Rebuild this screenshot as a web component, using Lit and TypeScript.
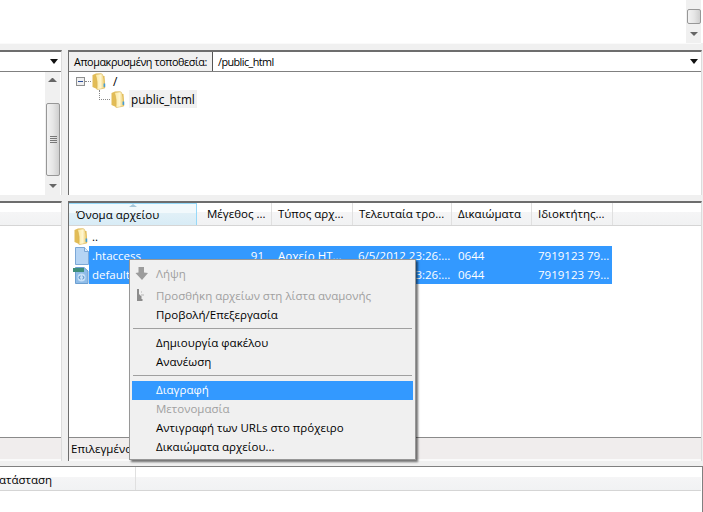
import { LitElement, html, css, svg } from "lit";
import { customElement } from "lit/decorators.js";

const folder = () => html`<svg class="ico fo" width="14" height="17" viewBox="0 0 14 17">
  <defs><linearGradient id="fg" x1="0" x2="1" y1="0" y2="0"><stop offset="0" stop-color="#fbe79c"/><stop offset="0.55" stop-color="#fff6cf"/><stop offset="1" stop-color="#e9c763"/></linearGradient></defs>
  <path d="M0.5 2 L4 0.5 L9 0.5 L9 3 L12.5 3 L13 15 L5 16 L0.5 14 Z" fill="#e2bc56"/>
  <path d="M3.5 1.5 L10 0.8 Q12.5 4 12.8 15 L5 16.8 Q6 8 3.5 1.5 Z" fill="url(#fg)" stroke="#d9b350" stroke-width=".5"/>
  <rect x="11.6" y="10.5" width="1.6" height="3.4" fill="#3f9bd8"/>
</svg>`;

const doc = html`<svg class="ico dc" width="14" height="18" viewBox="0 0 14 18">
  <path d="M0.5 .5 H9.5 L13.5 4.5 V17.5 H0.5 Z" fill="#b5d4f4" stroke="#7ba7d6"/>
  <path d="M9.5 .5 V4.5 H13.5" fill="#dcebfa" stroke="#7ba7d6"/>
</svg>`;

const htmlDoc = html`<svg class="ico" width="16" height="18" viewBox="0 0 16 18">
  <path d="M2.5 1.5 H11 L15 5 V17.5 H2.5 Z" fill="#8fbce8" stroke="#6c9fd0"/>
  <rect x="0" y="2" width="11" height="4" fill="#3f8e7b"/>
  <circle cx="8.5" cy="11.5" r="4" fill="#c7e0f7"/>
  <path d="M7.5 10 L5.8 11.5 L7.5 13 M9.5 10 L11.2 11.5 L9.5 13" fill="none" stroke="#3c7fc0"/>
</svg>`;

const scrollGrip = svg`<path d="M3 0.5H10M3 2.5H10M3 4.5H10M3 6.5H10" stroke="#777" fill="none"/>`;

const columns = [
  { t: "Όνομα αρχείου", w: 128, p: 7, active: true },
  { t: "Μέγεθος ...", w: 75, p: 10 },
  { t: "Τύπος αρχ...", w: 81, p: 6 },
  { t: "Τελευταία τρο...", w: 99, p: 6 },
  { t: "Δικαιώματα", w: 80, p: 6 },
  { t: "Ιδιοκτήτης...", w: 81, p: 6 },
];

const files = [
  { n: ".htaccess", s: "91", t: "Αρχείο HT...", d: "6/5/2012 23:26:...", p: "0644", o: "7919123 79...", i: doc },
  { n: "default.html", s: "", t: "", d: "6/5/2012 23:26:...", p: "0644", o: "7919123 79...", i: htmlDoc },
];

type Item = { t?: string; off?: boolean; hi?: boolean; sep?: string; ic?: unknown; c?: string };
const menu: Item[] = [
  { t: "Λήψη", off: true, c: "first", ic: html`<svg width="16" height="16" viewBox="0 0 16 16"><path d="M4.5 2H10V7.5L14 8L8 15L1.5 8L4.5 7.5Z" fill="#9c9c9c"/></svg>` },
  { t: "Προσθήκη αρχείων στη λίστα αναμονής", off: true, ic: html`<svg width="16" height="16" viewBox="0 0 16 16"><path d="M3 2H5V7L8 10L7 11L9 13L8 14H3Z" fill="#8c8c8c"/><path d="M7 8H10M7 5H8" stroke="#b5b5b5"/></svg>` },
  { t: "Προβολή/Επεξεργασία" },
  { sep: "s1" },
  { t: "Δημιουργία φακέλου" },
  { t: "Ανανέωση" },
  { sep: "s2" },
  { t: "Διαγραφή", hi: true },
  { t: "Μετονομασία", off: true },
  { t: "Αντιγραφή των URLs στο πρόχειρο" },
  { t: "Δικαιώματα αρχείου..." },
];

@customElement("app-root")
export class AppRoot extends LitElement {
  static styles = css`
    :host { display: block; width: 703px; height: 512px; overflow: hidden; }
    .app { position: relative; width: 703px; height: 512px; overflow: hidden; background: #f0f0f0; color: #000;
      font: 11.5px/19px "Open Sans", "Noto Sans", sans-serif; display: flex; flex-direction: column; }
    .log { height: 43px; background: #fff; display: flex; justify-content: flex-end; padding-right: 2px; flex: none; }
    .vbar { width: 15px; background: #f0f0f0; display: flex; flex-direction: column; align-items: center; flex: none; }
    .log .vbar { justify-content: flex-end; }
    .thumb { width: 14px; box-sizing: border-box; border: 1px solid #979797; border-radius: 2px;
      background: linear-gradient(90deg, #f2f2f2, #e6e6e6 50%, #cfcfcf); display: flex; align-items: center; justify-content: center; }
    .log .thumb { height: 15px; }
    .arrow { width: 0; height: 0; border: 4px solid transparent; }
    .arrow.dn { border-top: 4px solid #666; border-bottom: 0; }
    .arrow.up { border-bottom: 4px solid #666; border-top: 0; }
    .log .arrow { margin: 8px 0 7px; }
    .strip { height: 7px; flex: none; border-top: 1px solid #fafafa; margin-right: 2px; box-sizing: border-box; }
    .panes { display: grid; grid-template-columns: 62px 634px; column-gap: 6px; }
    .top { height: 145px; flex: none; margin-bottom: 6px; }
    .bot { height: 260px; flex: none; }
    .pane { display: flex; flex-direction: column; background: #fff; border-top: 2px solid #6d6d6d; min-width: 0; overflow: hidden; box-sizing: border-box; }
    .pane.r { border-left: 1px solid #6d6d6d; border-right: 1px solid #dcdcdc; }
    .pane.l { border-right: 1px solid #dcdcdc; }
    .loc { height: 20px; flex: none; display: flex; border-bottom: 1px solid #808080; box-sizing: border-box; }
    .loc label { width: 144px; box-sizing: border-box; padding: 0 0 0 5px; background: #f0f0f0; border-right: 1px solid #555; font-size: 10.8px; letter-spacing: -0.4px; line-height: 19px; white-space: nowrap; flex: none; }
    .loc .path { flex: 1; padding-left: 5px; line-height: 19px; font-size: 10.8px; letter-spacing: -0.55px; }
    .drop { align-self: center; margin-right: 3px; margin-left: auto; width: 0; height: 0; border: 4px solid transparent; border-top: 5px solid #111; border-bottom: 0; }
    .body { flex: 1; display: flex; justify-content: flex-end; min-height: 0; }
    .body .vbar { width: 15px; margin-right: 1px; }
    .l .vbar { padding-top: 6px; box-sizing: border-box; height: 123px; }
    .l .thumb { height: 73px; margin-top: 21px; margin-bottom: 8px; }
    .tree { flex: 1; display: flex; flex-direction: column; padding: 0 0 0 7px; height: 123px; box-sizing: border-box; }
    .node { display: flex; align-items: center; height: 18px; }
    .exp { width: 9px; height: 9px; box-sizing: border-box; border: 1px solid #8e8f8f; background: #f0f0f0; display: flex; align-items: center; justify-content: center; flex: none; }
    .exp i { width: 5px; height: 1px; background: #2b4d9b; }
    .dot { width: 6px; border-top: 1px dotted #888; margin-right: 1px; flex: none; }
    .slash { margin-left: 7px; font-size: 12px; }
    .second { padding-left: 23px; }
    .elbow { width: 11px; height: 10px; margin-right: 1px; align-self: flex-start; border-left: 1px dotted #888; border-bottom: 1px dotted #888; box-sizing: border-box; flex: none; }
    .tag { margin-left: 4px; padding: 0 2px; background: #f0f0f0; height: 18px; line-height: 18px; font-size: 11.8px; }
    .head { height: 23px; flex: none; display: flex; box-sizing: border-box; border-bottom: 1px solid #d5d5d5; background: linear-gradient(#fff 0 9px, #f5f5f6 9px, #f1f2f3); }
    .col { box-sizing: border-box; border-right: 1px solid #e0e0e0; line-height: 22px; white-space: nowrap; overflow: hidden; position: relative; flex: none; font-size: 11.5px; }
    .col.active { border: 1px solid #96d9f9; border-bottom: 0; border-left: 0; background: linear-gradient(#f2f9fc 0 9px, #e1f0f7 9px, #d8ecf6); }
    .sort { position: absolute; left: 60px; top: 0; width: 0; height: 0; border: 4px solid transparent; border-bottom: 3px solid #a6c6d8; border-top: 0; }
    .rows { flex: 1; padding-top: 1px; display: flex; flex-direction: column; }
    .row { height: 19px; display: flex; align-items: center; flex: none; }
    .ico { flex: none; display: block; }
    .iconcell { width: 20px; flex: none; display: flex; padding-left: 4px; box-sizing: border-box; }
    .iconcell .fo { margin-left: 1px; }
    .iconcell .dc { margin-left: 2px; }
    .cells { display: flex; height: 19px; width: 523px; align-items: center; white-space: nowrap; }
    .sel { background: #3399ff; color: #fff; }
    .cell { flex: none; box-sizing: border-box; overflow: hidden; }
    .up { padding-left: 1px; }
    .c1 { width: 110px; padding-left: 3px; } .c2 { width: 65px; text-align: right; } .c3 { width: 94px; padding-left: 14px; } .c4 { width: 100px; } .c5 { width: 80px; } .c6 { width: 74px; }
    .status { height: 24px; flex: none; border-top: 1px solid #8a8a8a; background: #f0eded; box-sizing: border-box; padding-left: 2px; line-height: 22px; border-bottom: 2px solid #fafafa; }
    .queue { height: 46px; flex: none; margin-top: 5px; background: #fff; border-top: 1px solid #808080; border-right: 1px solid #808080; box-sizing: border-box; width: 703px; }
    .queue .head { height: 24px; background: linear-gradient(#fff 0 10px, #f5f5f6 10px, #f1f2f3); width: 701px; }
    .qc { width: 136px; flex: none; box-sizing: border-box; border-right: 1px solid #e0e0e0; display: flex; justify-content: flex-end; padding-right: 83px; line-height: 25px; overflow: hidden; white-space: nowrap; }
    .qc span { flex: none; }
    .menu { position: absolute; left: 129px; top: 259px; width: 287px; height: 201px; box-sizing: border-box; background: #f0f0f0; border: 1px solid #979797; padding: 3px 2px 2px;
      box-shadow: 2px 2px 2px rgba(0,0,0,.55); display: flex; flex-direction: column; }
    .mi { height: 19px; flex: none; display: flex; align-items: center; padding-left: 24px; position: relative; white-space: nowrap; box-sizing: border-box; }
    .mi.d { color: #a0a0a0; }
    .mi.h { background: #3399ff; color: #fff; }
    .mi svg { position: absolute; left: 2px; top: 1px; }
    .mi.first { margin-top: 1px; margin-bottom: 3px; }
    .sp { height: 1px; background: #a0a0a0; margin: 4px 1px 4px 1px; flex: none; }
    .sp.s2 { margin-bottom: 5px; }
    .sp.s2 ~ .mi { padding-bottom: 2px; }
  `;

  render() {
    const head = html`<div class="head">${columns.map(c => html`<div class=${"col" + (c.active ? " active" : "")} style="width:${c.w}px;padding-left:${c.p}px">${c.active ? html`<i class="sort"></i>` : ""}${c.t}</div>`)}</div>`;
    return html`<div class="app">
      <div class="log"><div class="vbar"><div class="thumb"></div><div class="arrow dn"></div></div></div>
      <div class="strip"></div>
      <div class="panes top">
        <div class="pane l">
          <div class="loc"><span class="drop"></span></div>
          <div class="body"><div class="vbar"><div class="arrow up"></div><div class="thumb"><svg width="13" height="7">${scrollGrip}</svg></div><div class="arrow dn"></div></div></div>
        </div>
        <div class="pane r">
          <div class="loc"><label>Απομακρυσμένη τοποθεσία:</label><span class="path">/public_html</span><span class="drop"></span></div>
          <div class="tree">
            <div class="node"><span class="exp"><i></i></span><span class="dot"></span>${folder()}<span class="slash">/</span></div>
            <div class="node second"><span class="elbow"></span>${folder()}<span class="tag">public_html</span></div>
          </div>
        </div>
      </div>
      <div class="panes bot">
        <div class="pane l">
          <div class="head"></div><div class="rows"></div><div class="status"></div>
        </div>
        <div class="pane r">
          ${head}
          <div class="rows">
            <div class="row"><span class="iconcell">${folder()}</span><div class="cell c1 up">..</div></div>
            ${files.map(f => html`<div class="row"><span class="iconcell">${f.i}</span><div class="cells sel"><div class="cell c1">${f.n}</div><div class="cell c2">${f.s}</div><div class="cell c3">${f.t}</div><div class="cell c4">${f.d}</div><div class="cell c5">${f.p}</div><div class="cell c6">${f.o}</div></div></div>`)}
          </div>
          <div class="status">Επιλεγμένα 2 αρχεία.</div>
        </div>
      </div>
      <div class="queue"><div class="head"><div class="qc"><span>Κατάσταση</span></div></div></div>
      <div class="menu">
        ${menu.map(m => m.sep ? html`<div class=${"sp " + m.sep}></div>` : html`<div class=${"mi" + (m.off ? " d" : "") + (m.hi ? " h" : "") + (m.c ? " " + m.c : "")}>${m.ic ?? ""}${m.t}</div>`)}
      </div>
    </div>`;
  }
}
